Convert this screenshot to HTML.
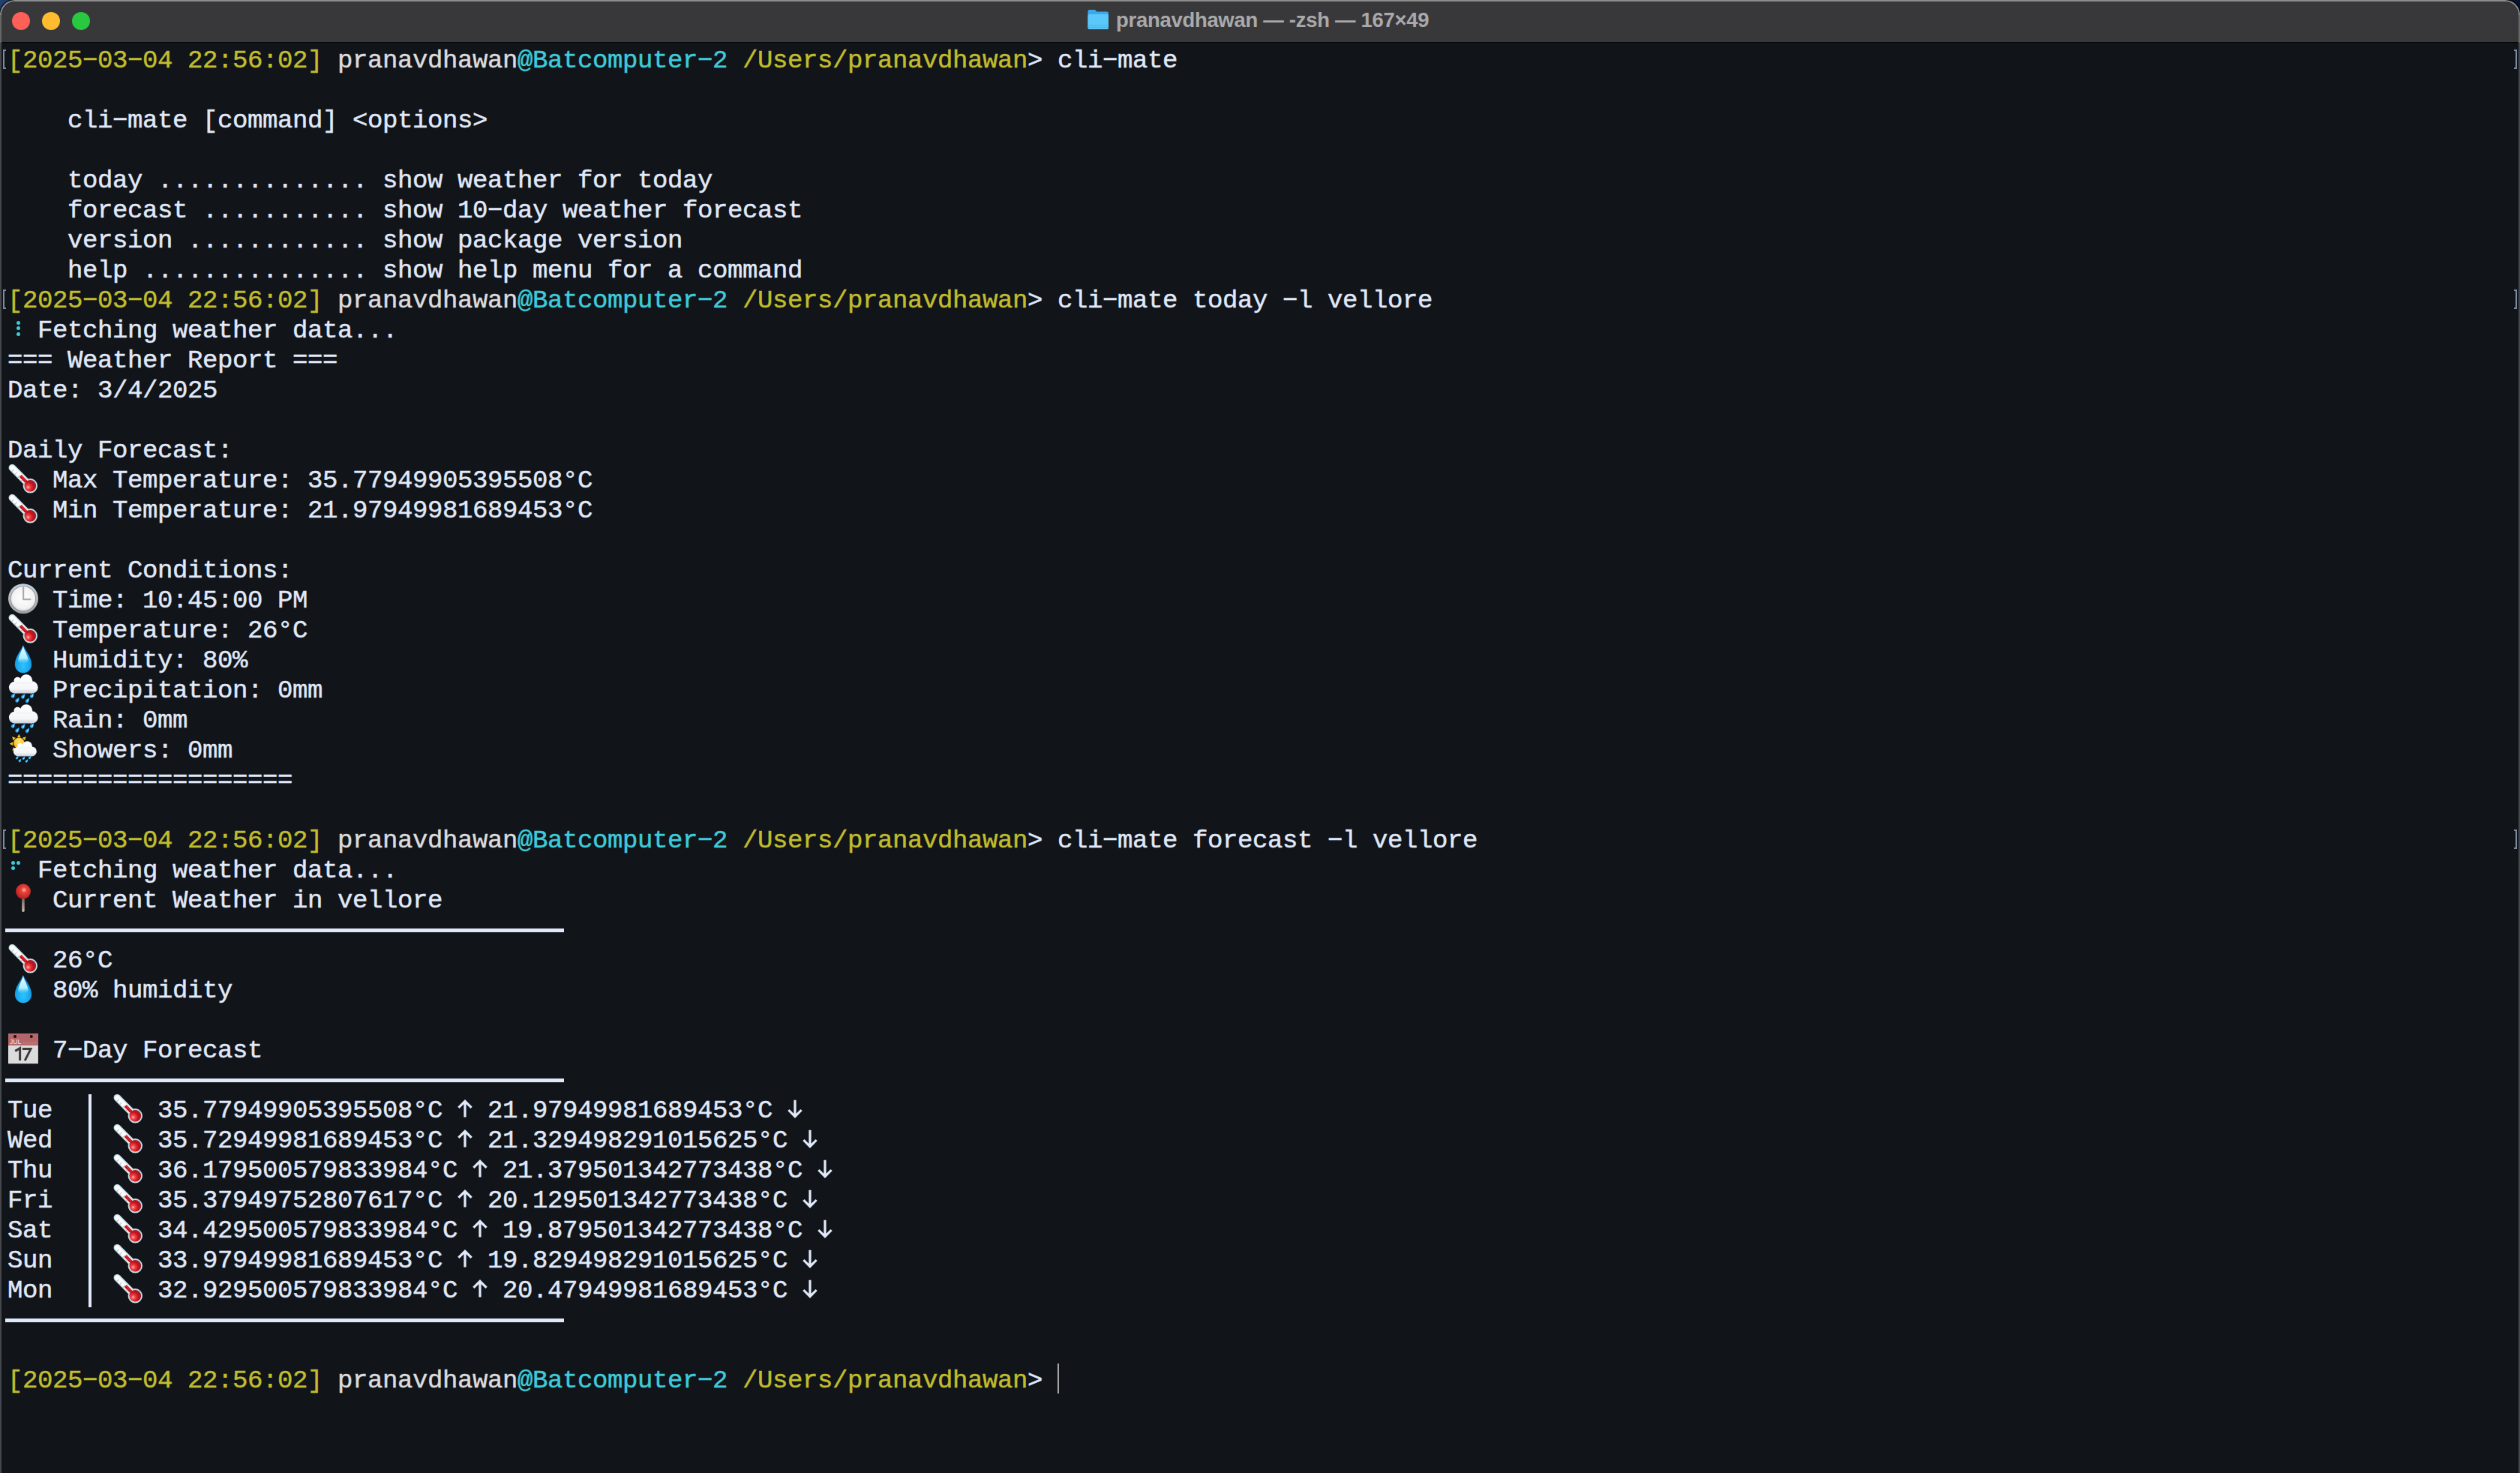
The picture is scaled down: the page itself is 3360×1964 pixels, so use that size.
<!DOCTYPE html>
<html><head><meta charset="utf-8"><title>Terminal</title><style>
html,body{margin:0;padding:0;width:3360px;height:1964px;overflow:hidden;background:#111419;}
#dtl{position:absolute;left:0;top:0;width:30px;height:30px;background:#20406e;}
#dtr{position:absolute;left:3330px;top:0;width:30px;height:30px;background:#06142f;}
#win{position:absolute;left:0;top:0;width:3360px;height:1990px;border-radius:20px 20px 0 0;overflow:hidden;background:#8c8c8c;box-shadow:0 0 1.5px 0.5px #000;}
#inner{position:absolute;left:2px;top:2px;width:3356px;height:1990px;border-radius:18px 18px 0 0;overflow:hidden;background:#111419;}
#lb{position:absolute;left:0;top:57px;width:2px;height:1907px;background:#44474c;}
#rb{position:absolute;left:3358px;top:57px;width:2px;height:1907px;background:#44474c;}
#lbt{position:absolute;left:0;top:20px;width:2px;height:37px;background:#666;}
#rbt{position:absolute;left:3358px;top:20px;width:2px;height:37px;background:#666;}
#title{position:absolute;left:0;top:0;width:3356px;height:54px;background:#38383a;border-bottom:1px solid #050505;}
.tl{position:absolute;top:14px;width:24px;height:24px;border-radius:50%;}
#ttl{position:absolute;left:1488px;top:2px;height:50px;line-height:50px;font-family:"Liberation Sans",sans-serif;font-weight:bold;font-size:27.5px;letter-spacing:-0.3px;color:#a9a9ab;white-space:pre;}
.r{position:absolute;height:40px;line-height:40px;font-family:"Liberation Mono",monospace;font-size:34.0px;letter-spacing:-0.4033px;white-space:pre;color:#e0e9f9;-webkit-text-stroke:0.45px currentColor;}
.em{position:absolute;overflow:visible;}
.dot{position:absolute;width:5px;height:5px;border-radius:50%;background:#3ecbd9;}
.hl{position:absolute;left:7px;width:745px;height:5px;background:#e0e9f9;}
.vb{position:absolute;left:118px;top:1459px;width:3.5px;height:284px;background:#e0e9f9;}
.cur{position:absolute;left:1410px;top:1818px;width:2px;height:40px;background:#a6a6a6;}
.mk{position:absolute;width:2px;height:22px;border:2px solid #7b8aa0;box-sizing:content-box;}
</style></head>
<body><svg width="0" height="0" style="position:absolute"><defs>
<radialGradient id="gBulb" cx="0.32" cy="0.62" r="0.8"><stop offset="0" stop-color="#ffc0c0"/><stop offset="0.2" stop-color="#f04848"/><stop offset="0.55" stop-color="#c8101a"/><stop offset="1" stop-color="#7a2a35"/></radialGradient>
<radialGradient id="gDropB" cx="0.5" cy="0.72" r="0.55"><stop offset="0" stop-color="#2cc4ff"/><stop offset="0.7" stop-color="#1ba6ee"/><stop offset="1" stop-color="#1488d8"/></radialGradient>
<linearGradient id="gDropH" x1="0" y1="0" x2="0" y2="1"><stop offset="0" stop-color="#f2fdff"/><stop offset="0.7" stop-color="#b5f0ff" stop-opacity="0.95"/><stop offset="1" stop-color="#5fd3ff" stop-opacity="0"/></linearGradient>
<radialGradient id="gClock" cx="0.5" cy="0.45" r="0.6"><stop offset="0" stop-color="#ffffff"/><stop offset="0.75" stop-color="#f2f2f2"/><stop offset="1" stop-color="#c9c9cc"/></radialGradient>
<linearGradient id="gRim" x1="0" y1="0" x2="0" y2="1"><stop offset="0" stop-color="#c3d0de"/><stop offset="0.5" stop-color="#b8b9b8"/><stop offset="1" stop-color="#9c9fa3"/></linearGradient>
<linearGradient id="gCloudU" gradientUnits="userSpaceOnUse" x1="0" y1="0" x2="0" y2="26"><stop offset="0" stop-color="#ffffff"/><stop offset="0.75" stop-color="#f4f5f7"/><stop offset="1" stop-color="#c7cdd6"/></linearGradient>
<radialGradient id="gSun" cx="0.5" cy="0.35" r="0.7"><stop offset="0" stop-color="#ffe770"/><stop offset="1" stop-color="#f5a912"/></radialGradient>
<radialGradient id="gPin" cx="0.55" cy="0.4" r="0.6"><stop offset="0" stop-color="#ffb8a8"/><stop offset="0.3" stop-color="#e8463a"/><stop offset="1" stop-color="#b81c20"/></radialGradient>
<linearGradient id="gNeedle" x1="0" y1="0" x2="0" y2="1"><stop offset="0" stop-color="#6e6860"/><stop offset="1" stop-color="#cdbcaa"/></linearGradient>
</defs></svg>
<div id="dtl"></div><div id="dtr"></div>
<div id="win"><div id="inner"><div id="title"></div><div class="tl" style="left:14px;background:#fe5f57"></div><div class="tl" style="left:54px;background:#febc2e"></div><div class="tl" style="left:94px;background:#28c840"></div>
</div></div>
<div id="lbt"></div><div id="rbt"></div><div id="lb"></div><div id="rb"></div>
<svg style="position:absolute;left:1450px;top:12px" width="30" height="28" viewBox="0 0 30 28"><path d="M0.5,3 Q0.5,1 2.5,1 L10,1 L12.5,3.5 L26,3.5 Q28,3.5 28,5.5 L28,25 Q28,27 26,27 L2.5,27 Q0.5,27 0.5,25 Z" fill="#3aa8ee"/><rect x="0.5" y="7" width="27.5" height="20" rx="2" fill="#5ac8fa"/><path d="M1,22 H27.5 M1,24.5 H27.5" stroke="#3ba6e0" stroke-width="0.6"/></svg>
<div id="ttl">pranavdhawan — -zsh — 167×49</div>
<div class="r" style="top:61.35px;left:10px"><span style="color:#c0bd2d">[2025−03−04 22:56:02]</span> <span style="color:#dcdcdc">pranavdhawan</span><span style="color:#3ecbd9">@Batcomputer−2</span> <span style="color:#c0bd2d">/Users/pranavdhawan</span><span style="color:#e0e9f9">&gt;</span><span style="color:#e0e9f9"> cli−mate</span></div><div class="mk" style="top:66.0px;left:4px;border-right:none"></div><div class="mk" style="top:66.0px;left:3352px;border-left:none"></div><div class="r" style="top:141.35px;left:10px"><span style="color:#e0e9f9">    cli−mate [command] &lt;options&gt;</span></div><div class="r" style="top:221.35px;left:10px"><span style="color:#e0e9f9">    today .............. show weather for today</span></div><div class="r" style="top:261.35px;left:10px"><span style="color:#e0e9f9">    forecast ........... show 10−day weather forecast</span></div><div class="r" style="top:301.35px;left:10px"><span style="color:#e0e9f9">    version ............ show package version</span></div><div class="r" style="top:341.35px;left:10px"><span style="color:#e0e9f9">    help ............... show help menu for a command</span></div><div class="r" style="top:381.35px;left:10px"><span style="color:#c0bd2d">[2025−03−04 22:56:02]</span> <span style="color:#dcdcdc">pranavdhawan</span><span style="color:#3ecbd9">@Batcomputer−2</span> <span style="color:#c0bd2d">/Users/pranavdhawan</span><span style="color:#e0e9f9">&gt;</span><span style="color:#e0e9f9"> cli−mate today −l vellore</span></div><div class="mk" style="top:386.0px;left:4px;border-right:none"></div><div class="mk" style="top:386.0px;left:3352px;border-left:none"></div><div class="dot" style="left:22.2px;top:427.9px"></div><div class="dot" style="left:22.2px;top:435.4px"></div><div class="dot" style="left:22.2px;top:443.3px"></div><div class="r" style="top:421.35px;left:10px"><span style="color:#e0e9f9">  Fetching weather data...</span></div><div class="r" style="top:461.35px;left:10px"><span style="color:#e0e9f9">=== Weather Report ===</span></div><div class="r" style="top:501.35px;left:10px"><span style="color:#e0e9f9">Date: 3/4/2025</span></div><div class="r" style="top:581.35px;left:10px"><span style="color:#e0e9f9">Daily Forecast:</span></div><svg class="em" style="left:10.0px;top:618.7px" width="44" height="44" viewBox="0 0 44 44"><g><line x1="6.3" y1="4.7" x2="30.3" y2="28.8" stroke="#c5dde6" stroke-width="9.5" stroke-linecap="round"/><circle cx="30.3" cy="28.8" r="9.7" fill="#c5dde6"/><line x1="6.3" y1="4.7" x2="30.3" y2="28.8" stroke="#fbfdff" stroke-width="6.5" stroke-linecap="round"/><line x1="17.2" y1="15.6" x2="29" y2="27.5" stroke="#c8101a" stroke-width="4.2"/><line x1="18" y1="15.4" x2="28" y2="25.6" stroke="#f07070" stroke-width="0.9" opacity="0.7"/><circle cx="30.3" cy="28.8" r="7.8" fill="url(#gBulb)"/><path d="M5.2,10.2 l3.6,-3.6 M9.2,14.2 l3.6,-3.6 M13.2,18.2 l3.6,-3.6 M17.6,22.6 l2.4,-2.4 M21.6,26.6 l2.4,-2.4" stroke="#8d979c" stroke-width="0.9" opacity="0.8"/></g></svg><div class="r" style="top:621.35px;left:10px"><span style="color:#e0e9f9">   Max Temperature: 35.77949905395508°C</span></div><svg class="em" style="left:10.0px;top:658.7px" width="44" height="44" viewBox="0 0 44 44"><g><line x1="6.3" y1="4.7" x2="30.3" y2="28.8" stroke="#c5dde6" stroke-width="9.5" stroke-linecap="round"/><circle cx="30.3" cy="28.8" r="9.7" fill="#c5dde6"/><line x1="6.3" y1="4.7" x2="30.3" y2="28.8" stroke="#fbfdff" stroke-width="6.5" stroke-linecap="round"/><line x1="17.2" y1="15.6" x2="29" y2="27.5" stroke="#c8101a" stroke-width="4.2"/><line x1="18" y1="15.4" x2="28" y2="25.6" stroke="#f07070" stroke-width="0.9" opacity="0.7"/><circle cx="30.3" cy="28.8" r="7.8" fill="url(#gBulb)"/><path d="M5.2,10.2 l3.6,-3.6 M9.2,14.2 l3.6,-3.6 M13.2,18.2 l3.6,-3.6 M17.6,22.6 l2.4,-2.4 M21.6,26.6 l2.4,-2.4" stroke="#8d979c" stroke-width="0.9" opacity="0.8"/></g></svg><div class="r" style="top:661.35px;left:10px"><span style="color:#e0e9f9">   Min Temperature: 21.97949981689453°C</span></div><div class="r" style="top:741.35px;left:10px"><span style="color:#e0e9f9">Current Conditions:</span></div><svg class="em" style="left:10.0px;top:778.7px" width="44" height="44" viewBox="0 0 44 44"><circle cx="21" cy="19.2" r="20" fill="url(#gRim)"/><circle cx="21" cy="19.2" r="17" fill="#85898e"/><circle cx="21" cy="19.2" r="16.3" fill="url(#gClock)"/><path d="M21.1,4.6 L21.1,20.2 L30.3,20.2" fill="none" stroke="#a9acb1" stroke-width="2.2" stroke-linecap="round" stroke-linejoin="round"/></svg><div class="r" style="top:781.35px;left:10px"><span style="color:#e0e9f9">   Time: 10:45:00 PM</span></div><svg class="em" style="left:10.0px;top:818.7px" width="44" height="44" viewBox="0 0 44 44"><g><line x1="6.3" y1="4.7" x2="30.3" y2="28.8" stroke="#c5dde6" stroke-width="9.5" stroke-linecap="round"/><circle cx="30.3" cy="28.8" r="9.7" fill="#c5dde6"/><line x1="6.3" y1="4.7" x2="30.3" y2="28.8" stroke="#fbfdff" stroke-width="6.5" stroke-linecap="round"/><line x1="17.2" y1="15.6" x2="29" y2="27.5" stroke="#c8101a" stroke-width="4.2"/><line x1="18" y1="15.4" x2="28" y2="25.6" stroke="#f07070" stroke-width="0.9" opacity="0.7"/><circle cx="30.3" cy="28.8" r="7.8" fill="url(#gBulb)"/><path d="M5.2,10.2 l3.6,-3.6 M9.2,14.2 l3.6,-3.6 M13.2,18.2 l3.6,-3.6 M17.6,22.6 l2.4,-2.4 M21.6,26.6 l2.4,-2.4" stroke="#8d979c" stroke-width="0.9" opacity="0.8"/></g></svg><div class="r" style="top:821.35px;left:10px"><span style="color:#e0e9f9">   Temperature: 26°C</span></div><svg class="em" style="left:10.0px;top:858.7px" width="44" height="44" viewBox="0 0 44 44"><path d="M20.9,0.9 C18,8 9.8,17 9.8,27 A11.2,11.2 0 0 0 32.2,27 C32.2,17 24,8 20.9,0.9 Z" fill="url(#gDropB)"/><path d="M20.9,2.2 C19.5,8 14.2,16 14.2,22 Q14.5,25.5 20.9,25.8 Q27.3,25.5 27.6,22 C27.6,16 22.3,8 20.9,2.2 Z" fill="url(#gDropH)"/></svg><div class="r" style="top:861.35px;left:10px"><span style="color:#e0e9f9">   Humidity: 80%</span></div><svg class="em" style="left:10.0px;top:898.7px" width="44" height="44" viewBox="0 0 44 44"><g transform="translate(0,0) scale(1.0)" fill="url(#gCloudU)"><circle cx="9.8" cy="17.6" r="7.9"/><circle cx="13.4" cy="8.6" r="4.9"/><circle cx="25" cy="8.6" r="8.3"/><circle cx="32.6" cy="17.4" r="8.1"/><rect x="9.8" y="9" width="22.8" height="16.5"/><rect x="12" y="8" width="10" height="6"/><path d="M11,12.5 Q17,9.5 22,12 M21,12.2 Q27,9.8 33,12.8" fill="none" stroke="#e6e8ec" stroke-width="0.8"/></g><g transform="translate(7.9,28.20) rotate(35) scale(0.850)"><path d="M0,-4.8 C1.2,-2 2.7,0 2.7,1.7 A2.7,2.7 0 0 1 -2.7,1.7 C-2.7,0 -1.2,-2 0,-4.8 Z" fill="#27a5ee"/><path d="M0.2,-2.6 C0.8,-1 1.6,0.4 1.4,1.8 Q0.6,2.6 -0.4,2 Z" fill="#c9f1ff" opacity="0.85"/></g><g transform="translate(21.2,29.20) rotate(35) scale(0.850)"><path d="M0,-4.8 C1.2,-2 2.7,0 2.7,1.7 A2.7,2.7 0 0 1 -2.7,1.7 C-2.7,0 -1.2,-2 0,-4.8 Z" fill="#27a5ee"/><path d="M0.2,-2.6 C0.8,-1 1.6,0.4 1.4,1.8 Q0.6,2.6 -0.4,2 Z" fill="#c9f1ff" opacity="0.85"/></g><g transform="translate(33,28.20) rotate(35) scale(0.850)"><path d="M0,-4.8 C1.2,-2 2.7,0 2.7,1.7 A2.7,2.7 0 0 1 -2.7,1.7 C-2.7,0 -1.2,-2 0,-4.8 Z" fill="#27a5ee"/><path d="M0.2,-2.6 C0.8,-1 1.6,0.4 1.4,1.8 Q0.6,2.6 -0.4,2 Z" fill="#c9f1ff" opacity="0.85"/></g><g transform="translate(13.4,34.20) rotate(35) scale(0.850)"><path d="M0,-4.8 C1.2,-2 2.7,0 2.7,1.7 A2.7,2.7 0 0 1 -2.7,1.7 C-2.7,0 -1.2,-2 0,-4.8 Z" fill="#27a5ee"/><path d="M0.2,-2.6 C0.8,-1 1.6,0.4 1.4,1.8 Q0.6,2.6 -0.4,2 Z" fill="#c9f1ff" opacity="0.85"/></g><g transform="translate(26.9,34.60) rotate(35) scale(0.850)"><path d="M0,-4.8 C1.2,-2 2.7,0 2.7,1.7 A2.7,2.7 0 0 1 -2.7,1.7 C-2.7,0 -1.2,-2 0,-4.8 Z" fill="#27a5ee"/><path d="M0.2,-2.6 C0.8,-1 1.6,0.4 1.4,1.8 Q0.6,2.6 -0.4,2 Z" fill="#c9f1ff" opacity="0.85"/></g></svg><div class="r" style="top:901.35px;left:10px"><span style="color:#e0e9f9">   Precipitation: 0mm</span></div><svg class="em" style="left:10.0px;top:938.7px" width="44" height="44" viewBox="0 0 44 44"><g transform="translate(0,0) scale(1.0)" fill="url(#gCloudU)"><circle cx="9.8" cy="17.6" r="7.9"/><circle cx="13.4" cy="8.6" r="4.9"/><circle cx="25" cy="8.6" r="8.3"/><circle cx="32.6" cy="17.4" r="8.1"/><rect x="9.8" y="9" width="22.8" height="16.5"/><rect x="12" y="8" width="10" height="6"/><path d="M11,12.5 Q17,9.5 22,12 M21,12.2 Q27,9.8 33,12.8" fill="none" stroke="#e6e8ec" stroke-width="0.8"/></g><g transform="translate(7.9,28.20) rotate(35) scale(0.850)"><path d="M0,-4.8 C1.2,-2 2.7,0 2.7,1.7 A2.7,2.7 0 0 1 -2.7,1.7 C-2.7,0 -1.2,-2 0,-4.8 Z" fill="#27a5ee"/><path d="M0.2,-2.6 C0.8,-1 1.6,0.4 1.4,1.8 Q0.6,2.6 -0.4,2 Z" fill="#c9f1ff" opacity="0.85"/></g><g transform="translate(21.2,29.20) rotate(35) scale(0.850)"><path d="M0,-4.8 C1.2,-2 2.7,0 2.7,1.7 A2.7,2.7 0 0 1 -2.7,1.7 C-2.7,0 -1.2,-2 0,-4.8 Z" fill="#27a5ee"/><path d="M0.2,-2.6 C0.8,-1 1.6,0.4 1.4,1.8 Q0.6,2.6 -0.4,2 Z" fill="#c9f1ff" opacity="0.85"/></g><g transform="translate(33,28.20) rotate(35) scale(0.850)"><path d="M0,-4.8 C1.2,-2 2.7,0 2.7,1.7 A2.7,2.7 0 0 1 -2.7,1.7 C-2.7,0 -1.2,-2 0,-4.8 Z" fill="#27a5ee"/><path d="M0.2,-2.6 C0.8,-1 1.6,0.4 1.4,1.8 Q0.6,2.6 -0.4,2 Z" fill="#c9f1ff" opacity="0.85"/></g><g transform="translate(13.4,34.20) rotate(35) scale(0.850)"><path d="M0,-4.8 C1.2,-2 2.7,0 2.7,1.7 A2.7,2.7 0 0 1 -2.7,1.7 C-2.7,0 -1.2,-2 0,-4.8 Z" fill="#27a5ee"/><path d="M0.2,-2.6 C0.8,-1 1.6,0.4 1.4,1.8 Q0.6,2.6 -0.4,2 Z" fill="#c9f1ff" opacity="0.85"/></g><g transform="translate(26.9,34.60) rotate(35) scale(0.850)"><path d="M0,-4.8 C1.2,-2 2.7,0 2.7,1.7 A2.7,2.7 0 0 1 -2.7,1.7 C-2.7,0 -1.2,-2 0,-4.8 Z" fill="#27a5ee"/><path d="M0.2,-2.6 C0.8,-1 1.6,0.4 1.4,1.8 Q0.6,2.6 -0.4,2 Z" fill="#c9f1ff" opacity="0.85"/></g></svg><div class="r" style="top:941.35px;left:10px"><span style="color:#e0e9f9">   Rain: 0mm</span></div><svg class="em" style="left:10.0px;top:978.7px" width="44" height="44" viewBox="0 0 44 44"><path transform="translate(15.3,-0.3) rotate(0)" d="M0,0 L2.4,4.5 L-2.4,4.5 Z" fill="#f6c21c"/><path transform="translate(2.6,12.7) rotate(-90)" d="M0,0 L2.4,4.5 L-2.4,4.5 Z" fill="#f6c21c"/><path transform="translate(6.1,3.3) rotate(-45)" d="M0,0 L2.4,4.5 L-2.4,4.5 Z" fill="#f6c21c"/><path transform="translate(24.6,3.3) rotate(45)" d="M0,0 L2.4,4.5 L-2.4,4.5 Z" fill="#f6c21c"/><path transform="translate(6.3,21.8) rotate(-135)" d="M0,0 L2.4,4.5 L-2.4,4.5 Z" fill="#f6c21c"/><circle cx="15.3" cy="11.7" r="7.2" fill="url(#gSun)"/><g transform="translate(6.3,9.0) scale(0.8)" fill="url(#gCloudU)"><circle cx="9.8" cy="17.6" r="7.9"/><circle cx="13.4" cy="8.6" r="4.9"/><circle cx="25" cy="8.6" r="8.3"/><circle cx="32.6" cy="17.4" r="8.1"/><rect x="9.8" y="9" width="22.8" height="16.5"/><rect x="12" y="8" width="10" height="6"/><path d="M11,12.5 Q17,9.5 22,12 M21,12.2 Q27,9.8 33,12.8" fill="none" stroke="#e6e8ec" stroke-width="0.8"/></g><g transform="translate(13,31.00) rotate(35) scale(0.595)"><path d="M0,-4.8 C1.2,-2 2.7,0 2.7,1.7 A2.7,2.7 0 0 1 -2.7,1.7 C-2.7,0 -1.2,-2 0,-4.8 Z" fill="#27a5ee"/><path d="M0.2,-2.6 C0.8,-1 1.6,0.4 1.4,1.8 Q0.6,2.6 -0.4,2 Z" fill="#c9f1ff" opacity="0.85"/></g><g transform="translate(21.8,31.60) rotate(35) scale(0.595)"><path d="M0,-4.8 C1.2,-2 2.7,0 2.7,1.7 A2.7,2.7 0 0 1 -2.7,1.7 C-2.7,0 -1.2,-2 0,-4.8 Z" fill="#27a5ee"/><path d="M0.2,-2.6 C0.8,-1 1.6,0.4 1.4,1.8 Q0.6,2.6 -0.4,2 Z" fill="#c9f1ff" opacity="0.85"/></g><g transform="translate(29.9,30.80) rotate(35) scale(0.595)"><path d="M0,-4.8 C1.2,-2 2.7,0 2.7,1.7 A2.7,2.7 0 0 1 -2.7,1.7 C-2.7,0 -1.2,-2 0,-4.8 Z" fill="#27a5ee"/><path d="M0.2,-2.6 C0.8,-1 1.6,0.4 1.4,1.8 Q0.6,2.6 -0.4,2 Z" fill="#c9f1ff" opacity="0.85"/></g><g transform="translate(16.7,34.90) rotate(35) scale(0.595)"><path d="M0,-4.8 C1.2,-2 2.7,0 2.7,1.7 A2.7,2.7 0 0 1 -2.7,1.7 C-2.7,0 -1.2,-2 0,-4.8 Z" fill="#27a5ee"/><path d="M0.2,-2.6 C0.8,-1 1.6,0.4 1.4,1.8 Q0.6,2.6 -0.4,2 Z" fill="#c9f1ff" opacity="0.85"/></g><g transform="translate(25.8,35.30) rotate(35) scale(0.595)"><path d="M0,-4.8 C1.2,-2 2.7,0 2.7,1.7 A2.7,2.7 0 0 1 -2.7,1.7 C-2.7,0 -1.2,-2 0,-4.8 Z" fill="#27a5ee"/><path d="M0.2,-2.6 C0.8,-1 1.6,0.4 1.4,1.8 Q0.6,2.6 -0.4,2 Z" fill="#c9f1ff" opacity="0.85"/></g></svg><div class="r" style="top:981.35px;left:10px"><span style="color:#e0e9f9">   Showers: 0mm</span></div><div class="r" style="top:1021.35px;left:10px"><span style="color:#e0e9f9">===================</span></div><div class="r" style="top:1101.35px;left:10px"><span style="color:#c0bd2d">[2025−03−04 22:56:02]</span> <span style="color:#dcdcdc">pranavdhawan</span><span style="color:#3ecbd9">@Batcomputer−2</span> <span style="color:#c0bd2d">/Users/pranavdhawan</span><span style="color:#e0e9f9">&gt;</span><span style="color:#e0e9f9"> cli−mate forecast −l vellore</span></div><div class="mk" style="top:1106.0px;left:4px;border-right:none"></div><div class="mk" style="top:1106.0px;left:3352px;border-left:none"></div><div class="dot" style="left:14.6px;top:1148.0px"></div><div class="dot" style="left:22.2px;top:1148.0px"></div><div class="dot" style="left:14.6px;top:1155.4px"></div><div class="r" style="top:1141.35px;left:10px"><span style="color:#e0e9f9">  Fetching weather data...</span></div><svg class="em" style="left:10.0px;top:1178.7px" width="44" height="44" viewBox="0 0 44 44"><rect x="19.2" y="18" width="3.5" height="19" rx="1.7" fill="url(#gNeedle)"/><circle cx="21" cy="9.6" r="10" fill="url(#gPin)"/></svg><div class="r" style="top:1181.35px;left:10px"><span style="color:#e0e9f9">   Current Weather in vellore</span></div><div class="hl" style="top:1238.1px"></div><svg class="em" style="left:10.0px;top:1258.7px" width="44" height="44" viewBox="0 0 44 44"><g><line x1="6.3" y1="4.7" x2="30.3" y2="28.8" stroke="#c5dde6" stroke-width="9.5" stroke-linecap="round"/><circle cx="30.3" cy="28.8" r="9.7" fill="#c5dde6"/><line x1="6.3" y1="4.7" x2="30.3" y2="28.8" stroke="#fbfdff" stroke-width="6.5" stroke-linecap="round"/><line x1="17.2" y1="15.6" x2="29" y2="27.5" stroke="#c8101a" stroke-width="4.2"/><line x1="18" y1="15.4" x2="28" y2="25.6" stroke="#f07070" stroke-width="0.9" opacity="0.7"/><circle cx="30.3" cy="28.8" r="7.8" fill="url(#gBulb)"/><path d="M5.2,10.2 l3.6,-3.6 M9.2,14.2 l3.6,-3.6 M13.2,18.2 l3.6,-3.6 M17.6,22.6 l2.4,-2.4 M21.6,26.6 l2.4,-2.4" stroke="#8d979c" stroke-width="0.9" opacity="0.8"/></g></svg><div class="r" style="top:1261.35px;left:10px"><span style="color:#e0e9f9">   26°C</span></div><svg class="em" style="left:10.0px;top:1298.7px" width="44" height="44" viewBox="0 0 44 44"><path d="M20.9,0.9 C18,8 9.8,17 9.8,27 A11.2,11.2 0 0 0 32.2,27 C32.2,17 24,8 20.9,0.9 Z" fill="url(#gDropB)"/><path d="M20.9,2.2 C19.5,8 14.2,16 14.2,22 Q14.5,25.5 20.9,25.8 Q27.3,25.5 27.6,22 C27.6,16 22.3,8 20.9,2.2 Z" fill="url(#gDropH)"/></svg><div class="r" style="top:1301.35px;left:10px"><span style="color:#e0e9f9">   80% humidity</span></div><svg class="em" style="left:10.0px;top:1378.7px" width="44" height="44" viewBox="0 0 44 44"><rect x="1" y="-0.8" width="39.9" height="40" fill="#dcdcdc"/><rect x="1" y="-0.8" width="39.9" height="15.7" fill="#b5666a"/><circle cx="10" cy="3.1" r="2" fill="#111"/><circle cx="31.8" cy="3.1" r="2" fill="#111"/><text x="3" y="12.9" font-family="Liberation Sans" font-size="8.6" fill="#f4e9e9">JUL</text><path d="M10.2,22.4 L16.6,18.6 V35.1 M19.8,19.6 H31 L23.2,35.1" fill="none" stroke="#3a3a3a" stroke-width="3.0" stroke-linejoin="miter"/><path d="M21,10.5 h18 M21,12.4 h18" stroke="#d9a8aa" stroke-width="0.7" stroke-dasharray="1.2 0.8" opacity="0.6"/></svg><div class="r" style="top:1381.35px;left:10px"><span style="color:#e0e9f9">   7−Day Forecast</span></div><div class="hl" style="top:1438.1px"></div><svg class="em" style="left:150.0px;top:1458.7px" width="44" height="44" viewBox="0 0 44 44"><g><line x1="6.3" y1="4.7" x2="30.3" y2="28.8" stroke="#c5dde6" stroke-width="9.5" stroke-linecap="round"/><circle cx="30.3" cy="28.8" r="9.7" fill="#c5dde6"/><line x1="6.3" y1="4.7" x2="30.3" y2="28.8" stroke="#fbfdff" stroke-width="6.5" stroke-linecap="round"/><line x1="17.2" y1="15.6" x2="29" y2="27.5" stroke="#c8101a" stroke-width="4.2"/><line x1="18" y1="15.4" x2="28" y2="25.6" stroke="#f07070" stroke-width="0.9" opacity="0.7"/><circle cx="30.3" cy="28.8" r="7.8" fill="url(#gBulb)"/><path d="M5.2,10.2 l3.6,-3.6 M9.2,14.2 l3.6,-3.6 M13.2,18.2 l3.6,-3.6 M17.6,22.6 l2.4,-2.4 M21.6,26.6 l2.4,-2.4" stroke="#8d979c" stroke-width="0.9" opacity="0.8"/></g></svg><div class="r" style="top:1461.35px;left:10px"><span style="color:#e0e9f9">Tue       35.77949905395508°C   21.97949981689453°C</span></div><svg class="em" style="left:610px;top:1460.4px" width="20" height="32" viewBox="0 0 20 32"><path d="M10,7.4 V29.6 M1.4,16.9 L10,8.3 L18.6,16.9" fill="none" stroke="#e0e9f9" stroke-width="3.2"/></svg><svg class="em" style="left:1050px;top:1460.4px" width="20" height="32" viewBox="0 0 20 32"><path d="M10,6.8 V29.4 M1.4,20 L10,28.7 L18.6,20" fill="none" stroke="#e0e9f9" stroke-width="3.2"/></svg><svg class="em" style="left:150.0px;top:1498.7px" width="44" height="44" viewBox="0 0 44 44"><g><line x1="6.3" y1="4.7" x2="30.3" y2="28.8" stroke="#c5dde6" stroke-width="9.5" stroke-linecap="round"/><circle cx="30.3" cy="28.8" r="9.7" fill="#c5dde6"/><line x1="6.3" y1="4.7" x2="30.3" y2="28.8" stroke="#fbfdff" stroke-width="6.5" stroke-linecap="round"/><line x1="17.2" y1="15.6" x2="29" y2="27.5" stroke="#c8101a" stroke-width="4.2"/><line x1="18" y1="15.4" x2="28" y2="25.6" stroke="#f07070" stroke-width="0.9" opacity="0.7"/><circle cx="30.3" cy="28.8" r="7.8" fill="url(#gBulb)"/><path d="M5.2,10.2 l3.6,-3.6 M9.2,14.2 l3.6,-3.6 M13.2,18.2 l3.6,-3.6 M17.6,22.6 l2.4,-2.4 M21.6,26.6 l2.4,-2.4" stroke="#8d979c" stroke-width="0.9" opacity="0.8"/></g></svg><div class="r" style="top:1501.35px;left:10px"><span style="color:#e0e9f9">Wed       35.72949981689453°C   21.329498291015625°C</span></div><svg class="em" style="left:610px;top:1500.4px" width="20" height="32" viewBox="0 0 20 32"><path d="M10,7.4 V29.6 M1.4,16.9 L10,8.3 L18.6,16.9" fill="none" stroke="#e0e9f9" stroke-width="3.2"/></svg><svg class="em" style="left:1070px;top:1500.4px" width="20" height="32" viewBox="0 0 20 32"><path d="M10,6.8 V29.4 M1.4,20 L10,28.7 L18.6,20" fill="none" stroke="#e0e9f9" stroke-width="3.2"/></svg><svg class="em" style="left:150.0px;top:1538.7px" width="44" height="44" viewBox="0 0 44 44"><g><line x1="6.3" y1="4.7" x2="30.3" y2="28.8" stroke="#c5dde6" stroke-width="9.5" stroke-linecap="round"/><circle cx="30.3" cy="28.8" r="9.7" fill="#c5dde6"/><line x1="6.3" y1="4.7" x2="30.3" y2="28.8" stroke="#fbfdff" stroke-width="6.5" stroke-linecap="round"/><line x1="17.2" y1="15.6" x2="29" y2="27.5" stroke="#c8101a" stroke-width="4.2"/><line x1="18" y1="15.4" x2="28" y2="25.6" stroke="#f07070" stroke-width="0.9" opacity="0.7"/><circle cx="30.3" cy="28.8" r="7.8" fill="url(#gBulb)"/><path d="M5.2,10.2 l3.6,-3.6 M9.2,14.2 l3.6,-3.6 M13.2,18.2 l3.6,-3.6 M17.6,22.6 l2.4,-2.4 M21.6,26.6 l2.4,-2.4" stroke="#8d979c" stroke-width="0.9" opacity="0.8"/></g></svg><div class="r" style="top:1541.35px;left:10px"><span style="color:#e0e9f9">Thu       36.179500579833984°C   21.379501342773438°C</span></div><svg class="em" style="left:630px;top:1540.4px" width="20" height="32" viewBox="0 0 20 32"><path d="M10,7.4 V29.6 M1.4,16.9 L10,8.3 L18.6,16.9" fill="none" stroke="#e0e9f9" stroke-width="3.2"/></svg><svg class="em" style="left:1090px;top:1540.4px" width="20" height="32" viewBox="0 0 20 32"><path d="M10,6.8 V29.4 M1.4,20 L10,28.7 L18.6,20" fill="none" stroke="#e0e9f9" stroke-width="3.2"/></svg><svg class="em" style="left:150.0px;top:1578.7px" width="44" height="44" viewBox="0 0 44 44"><g><line x1="6.3" y1="4.7" x2="30.3" y2="28.8" stroke="#c5dde6" stroke-width="9.5" stroke-linecap="round"/><circle cx="30.3" cy="28.8" r="9.7" fill="#c5dde6"/><line x1="6.3" y1="4.7" x2="30.3" y2="28.8" stroke="#fbfdff" stroke-width="6.5" stroke-linecap="round"/><line x1="17.2" y1="15.6" x2="29" y2="27.5" stroke="#c8101a" stroke-width="4.2"/><line x1="18" y1="15.4" x2="28" y2="25.6" stroke="#f07070" stroke-width="0.9" opacity="0.7"/><circle cx="30.3" cy="28.8" r="7.8" fill="url(#gBulb)"/><path d="M5.2,10.2 l3.6,-3.6 M9.2,14.2 l3.6,-3.6 M13.2,18.2 l3.6,-3.6 M17.6,22.6 l2.4,-2.4 M21.6,26.6 l2.4,-2.4" stroke="#8d979c" stroke-width="0.9" opacity="0.8"/></g></svg><div class="r" style="top:1581.35px;left:10px"><span style="color:#e0e9f9">Fri       35.37949752807617°C   20.129501342773438°C</span></div><svg class="em" style="left:610px;top:1580.4px" width="20" height="32" viewBox="0 0 20 32"><path d="M10,7.4 V29.6 M1.4,16.9 L10,8.3 L18.6,16.9" fill="none" stroke="#e0e9f9" stroke-width="3.2"/></svg><svg class="em" style="left:1070px;top:1580.4px" width="20" height="32" viewBox="0 0 20 32"><path d="M10,6.8 V29.4 M1.4,20 L10,28.7 L18.6,20" fill="none" stroke="#e0e9f9" stroke-width="3.2"/></svg><svg class="em" style="left:150.0px;top:1618.7px" width="44" height="44" viewBox="0 0 44 44"><g><line x1="6.3" y1="4.7" x2="30.3" y2="28.8" stroke="#c5dde6" stroke-width="9.5" stroke-linecap="round"/><circle cx="30.3" cy="28.8" r="9.7" fill="#c5dde6"/><line x1="6.3" y1="4.7" x2="30.3" y2="28.8" stroke="#fbfdff" stroke-width="6.5" stroke-linecap="round"/><line x1="17.2" y1="15.6" x2="29" y2="27.5" stroke="#c8101a" stroke-width="4.2"/><line x1="18" y1="15.4" x2="28" y2="25.6" stroke="#f07070" stroke-width="0.9" opacity="0.7"/><circle cx="30.3" cy="28.8" r="7.8" fill="url(#gBulb)"/><path d="M5.2,10.2 l3.6,-3.6 M9.2,14.2 l3.6,-3.6 M13.2,18.2 l3.6,-3.6 M17.6,22.6 l2.4,-2.4 M21.6,26.6 l2.4,-2.4" stroke="#8d979c" stroke-width="0.9" opacity="0.8"/></g></svg><div class="r" style="top:1621.35px;left:10px"><span style="color:#e0e9f9">Sat       34.429500579833984°C   19.879501342773438°C</span></div><svg class="em" style="left:630px;top:1620.4px" width="20" height="32" viewBox="0 0 20 32"><path d="M10,7.4 V29.6 M1.4,16.9 L10,8.3 L18.6,16.9" fill="none" stroke="#e0e9f9" stroke-width="3.2"/></svg><svg class="em" style="left:1090px;top:1620.4px" width="20" height="32" viewBox="0 0 20 32"><path d="M10,6.8 V29.4 M1.4,20 L10,28.7 L18.6,20" fill="none" stroke="#e0e9f9" stroke-width="3.2"/></svg><svg class="em" style="left:150.0px;top:1658.7px" width="44" height="44" viewBox="0 0 44 44"><g><line x1="6.3" y1="4.7" x2="30.3" y2="28.8" stroke="#c5dde6" stroke-width="9.5" stroke-linecap="round"/><circle cx="30.3" cy="28.8" r="9.7" fill="#c5dde6"/><line x1="6.3" y1="4.7" x2="30.3" y2="28.8" stroke="#fbfdff" stroke-width="6.5" stroke-linecap="round"/><line x1="17.2" y1="15.6" x2="29" y2="27.5" stroke="#c8101a" stroke-width="4.2"/><line x1="18" y1="15.4" x2="28" y2="25.6" stroke="#f07070" stroke-width="0.9" opacity="0.7"/><circle cx="30.3" cy="28.8" r="7.8" fill="url(#gBulb)"/><path d="M5.2,10.2 l3.6,-3.6 M9.2,14.2 l3.6,-3.6 M13.2,18.2 l3.6,-3.6 M17.6,22.6 l2.4,-2.4 M21.6,26.6 l2.4,-2.4" stroke="#8d979c" stroke-width="0.9" opacity="0.8"/></g></svg><div class="r" style="top:1661.35px;left:10px"><span style="color:#e0e9f9">Sun       33.97949981689453°C   19.829498291015625°C</span></div><svg class="em" style="left:610px;top:1660.4px" width="20" height="32" viewBox="0 0 20 32"><path d="M10,7.4 V29.6 M1.4,16.9 L10,8.3 L18.6,16.9" fill="none" stroke="#e0e9f9" stroke-width="3.2"/></svg><svg class="em" style="left:1070px;top:1660.4px" width="20" height="32" viewBox="0 0 20 32"><path d="M10,6.8 V29.4 M1.4,20 L10,28.7 L18.6,20" fill="none" stroke="#e0e9f9" stroke-width="3.2"/></svg><svg class="em" style="left:150.0px;top:1698.7px" width="44" height="44" viewBox="0 0 44 44"><g><line x1="6.3" y1="4.7" x2="30.3" y2="28.8" stroke="#c5dde6" stroke-width="9.5" stroke-linecap="round"/><circle cx="30.3" cy="28.8" r="9.7" fill="#c5dde6"/><line x1="6.3" y1="4.7" x2="30.3" y2="28.8" stroke="#fbfdff" stroke-width="6.5" stroke-linecap="round"/><line x1="17.2" y1="15.6" x2="29" y2="27.5" stroke="#c8101a" stroke-width="4.2"/><line x1="18" y1="15.4" x2="28" y2="25.6" stroke="#f07070" stroke-width="0.9" opacity="0.7"/><circle cx="30.3" cy="28.8" r="7.8" fill="url(#gBulb)"/><path d="M5.2,10.2 l3.6,-3.6 M9.2,14.2 l3.6,-3.6 M13.2,18.2 l3.6,-3.6 M17.6,22.6 l2.4,-2.4 M21.6,26.6 l2.4,-2.4" stroke="#8d979c" stroke-width="0.9" opacity="0.8"/></g></svg><div class="r" style="top:1701.35px;left:10px"><span style="color:#e0e9f9">Mon       32.929500579833984°C   20.47949981689453°C</span></div><svg class="em" style="left:630px;top:1700.4px" width="20" height="32" viewBox="0 0 20 32"><path d="M10,7.4 V29.6 M1.4,16.9 L10,8.3 L18.6,16.9" fill="none" stroke="#e0e9f9" stroke-width="3.2"/></svg><svg class="em" style="left:1070px;top:1700.4px" width="20" height="32" viewBox="0 0 20 32"><path d="M10,6.8 V29.4 M1.4,20 L10,28.7 L18.6,20" fill="none" stroke="#e0e9f9" stroke-width="3.2"/></svg><div class="vb"></div><div class="hl" style="top:1758.1px"></div><div class="r" style="top:1821.35px;left:10px"><span style="color:#c0bd2d">[2025−03−04 22:56:02]</span> <span style="color:#dcdcdc">pranavdhawan</span><span style="color:#3ecbd9">@Batcomputer−2</span> <span style="color:#c0bd2d">/Users/pranavdhawan</span><span style="color:#e0e9f9">&gt;</span></div><div class="cur"></div>
</body></html>
